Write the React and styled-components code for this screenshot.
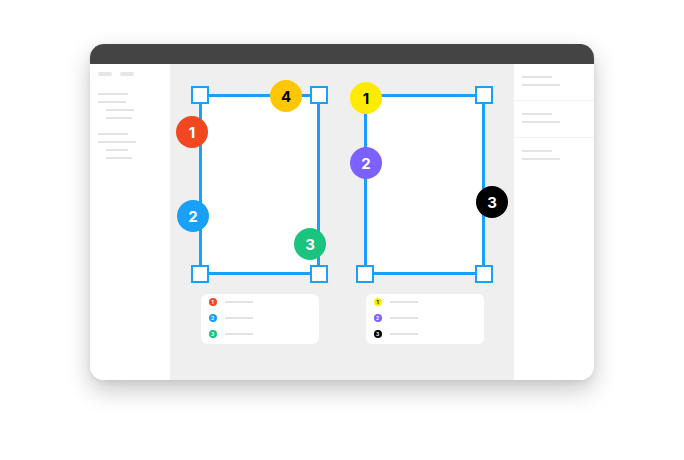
import styled, { createGlobalStyle } from 'styled-components';

const GlobalStyle = createGlobalStyle`
  html, body {
    margin: 0;
    padding: 0;
    background: #ffffff;
    font-family: Inter, "Liberation Sans", sans-serif;
  }
`;

const Page = styled.div`
  width: 684px;
  height: 460px;
  padding: 44px 0 0 90px;
  box-sizing: border-box;
`;

const Window = styled.div`
  width: 504px;
  height: 336px;
  border-radius: 14px;
  overflow: hidden;
  background: #ffffff;
  box-shadow: 0 10px 24px rgba(0, 0, 0, 0.22), 0 2px 6px rgba(0, 0, 0, 0.06);
  display: flex;
  flex-direction: column;
`;

const TitleBar = styled.div`
  height: 20px;
  background: #444444;
  flex-shrink: 0;
`;

const Body = styled.div`
  flex: 1;
  display: grid;
  grid-template-columns: 80px 1fr 80px;
`;

const LeftPanel = styled.div`
  background: #ffffff;
  padding: 8px 0 0 8px;
  display: flex;
  flex-direction: column;
`;

const PillRow = styled.div`
  display: flex;
  gap: 8px;
  margin-bottom: 17px;
`;

const Pill = styled.div`
  width: 14px;
  height: 4px;
  border-radius: 2px;
  background: #e6e6e6;
`;

const LineGroup = styled.div`
  display: flex;
  flex-direction: column;
  gap: 6px;
  margin-bottom: 14px;
`;

const Line = styled.div`
  width: ${({ $w }) => $w}px;
  height: 2px;
  margin-left: ${({ $indent }) => ($indent ? 8 : 0)}px;
  background: #e3e3e3;
`;

const Canvas = styled.div`
  background: #efefef;
  display: flex;
  justify-content: center;
  align-items: flex-start;
  gap: 44px;
  padding-top: 30px;
`;

const Column = styled.div`
  display: flex;
  flex-direction: column;
  align-items: center;
  gap: 19px;
`;

const Frame = styled.div`
  position: relative;
  width: 121px;
  height: 181px;
  box-sizing: border-box;
  border: 3px solid #18a0fb;
  background: #ffffff;
`;

const Handle = styled.div`
  position: absolute;
  width: 18px;
  height: 18px;
  box-sizing: border-box;
  border: 2.5px solid #18a0fb;
  background: #ffffff;
  ${({ $x }) => ($x === 'l' ? 'left: -11px;' : 'right: -11px;')}
  ${({ $y }) => ($y === 't' ? 'top: -11px;' : 'bottom: -11px;')}
`;

const Badge = styled.div`
  position: absolute;
  width: 32px;
  height: 32px;
  margin: -16px 0 0 -16px;
  border-radius: 50%;
  background: ${({ $bg }) => $bg};
  color: ${({ $fg }) => $fg};
  display: flex;
  align-items: center;
  justify-content: center;
  font-size: 15px;
  font-weight: 700;
`;

const Card = styled.div`
  width: 118px;
  height: 50px;
  box-sizing: border-box;
  background: #ffffff;
  border-radius: 6px;
  padding: 0 0 2px 8px;
  display: flex;
  flex-direction: column;
`;

const CardRow = styled.div`
  height: 16px;
  display: flex;
  align-items: center;
  gap: 8px;
`;

const Dot = styled.div`
  width: 8px;
  height: 8px;
  border-radius: 50%;
  background: ${({ $bg }) => $bg};
  color: ${({ $fg }) => $fg};
  font-size: 5px;
  font-weight: 700;
  line-height: 8px;
  text-align: center;
`;

const RightPanel = styled.div`
  background: #ffffff;
  display: flex;
  flex-direction: column;
`;

const Section = styled.div`
  padding: 12px 0 ${({ $last }) => ($last ? 0 : 14)}px 8px;
  border-bottom: ${({ $last }) => ($last ? 'none' : '1.5px solid #f2f2f2')};
  display: flex;
  flex-direction: column;
  gap: 6px;
`;

// badge centres, measured from the frame's inner (padding) box
const frames = [
  {
    badges: [
      { n: 4, x: 84, y: -1, bg: '#ffc700', fg: '#000' },
      { n: 1, x: -10, y: 35, bg: '#f24822', fg: '#fff' },
      { n: 2, x: -9, y: 119, bg: '#18a0fb', fg: '#fff' },
      { n: 3, x: 108, y: 147, bg: '#1bc47d', fg: '#fff' },
    ],
    legend: [
      { n: 1, bg: '#f24822', fg: '#fff' },
      { n: 2, bg: '#18a0fb', fg: '#fff' },
      { n: 3, bg: '#1bc47d', fg: '#fff' },
    ],
  },
  {
    badges: [
      { n: 1, x: -1, y: 1, bg: '#ffeb00', fg: '#000' },
      { n: 2, x: -1, y: 66, bg: '#7b61ff', fg: '#fff' },
      { n: 3, x: 125, y: 105, bg: '#000000', fg: '#fff' },
    ],
    legend: [
      { n: 1, bg: '#ffeb00', fg: '#000' },
      { n: 2, bg: '#7b61ff', fg: '#fff' },
      { n: 3, bg: '#000000', fg: '#fff' },
    ],
  },
];

export default function App() {
  return (
    <>
      <GlobalStyle />
      <Page>
        <Window>
          <TitleBar />
          <Body>
            <LeftPanel>
              <PillRow>
                <Pill />
                <Pill />
              </PillRow>
              <LineGroup>
                <Line $w={30} />
                <Line $w={28} />
                <Line $w={28} $indent />
                <Line $w={26} $indent />
              </LineGroup>
              <LineGroup>
                <Line $w={30} />
                <Line $w={38} />
                <Line $w={22} $indent />
                <Line $w={26} $indent />
              </LineGroup>
            </LeftPanel>

            <Canvas>
              {frames.map((f, i) => (
                <Column key={i}>
                  <Frame>
                    {i === 0 && <Handle $x="l" $y="t" />}
                    <Handle $x="r" $y="t" />
                    <Handle $x="l" $y="b" />
                    <Handle $x="r" $y="b" />
                    {f.badges.map(b => (
                      <Badge
                        key={b.n}
                        $bg={b.bg}
                        $fg={b.fg}
                        style={{ left: b.x, top: b.y }}
                      >
                        {b.n}
                      </Badge>
                    ))}
                  </Frame>
                  <Card>
                    {f.legend.map(l => (
                      <CardRow key={l.n}>
                        <Dot $bg={l.bg} $fg={l.fg}>{l.n}</Dot>
                        <Line $w={28} />
                      </CardRow>
                    ))}
                  </Card>
                </Column>
              ))}
            </Canvas>

            <RightPanel>
              <Section>
                <Line $w={30} />
                <Line $w={38} />
              </Section>
              <Section>
                <Line $w={30} />
                <Line $w={38} />
              </Section>
              <Section $last>
                <Line $w={30} />
                <Line $w={38} />
              </Section>
            </RightPanel>
          </Body>
        </Window>
      </Page>
    </>
  );
}
